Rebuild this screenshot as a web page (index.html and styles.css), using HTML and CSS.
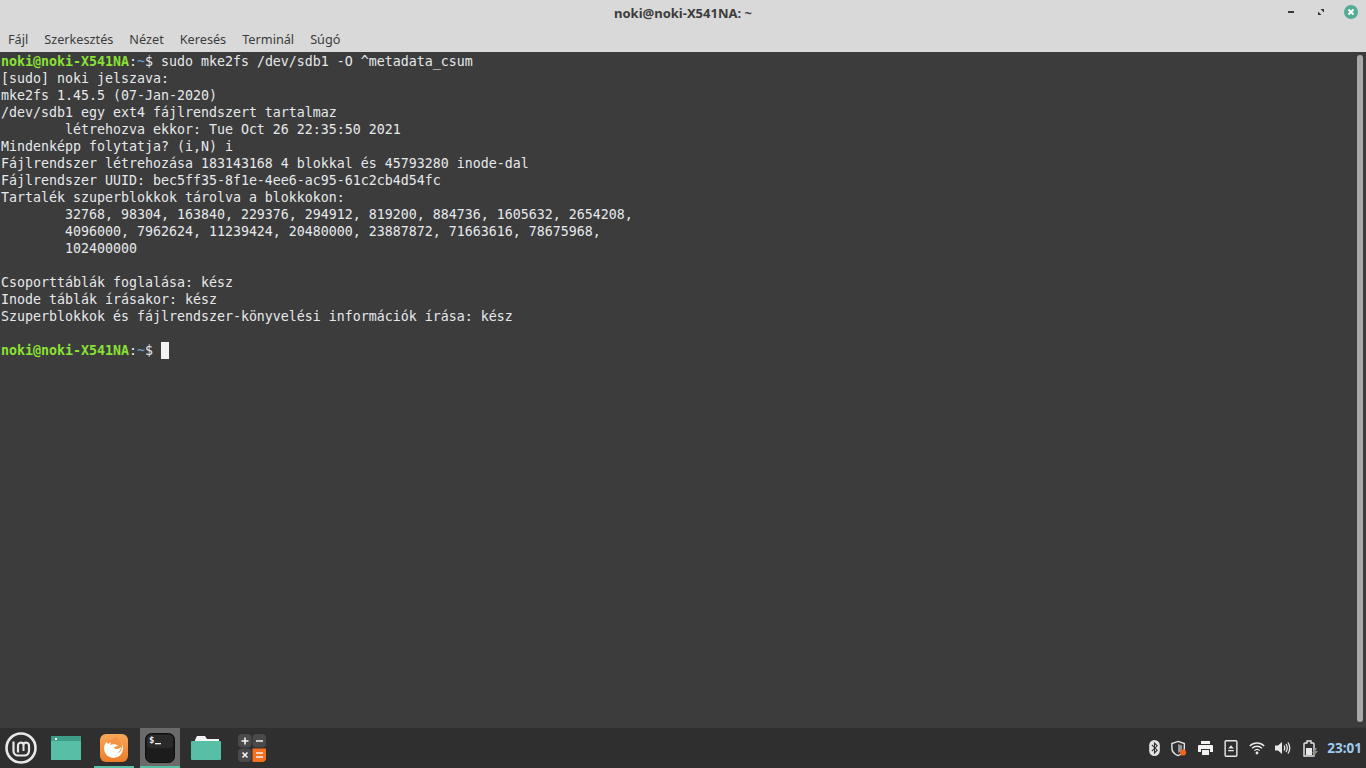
FILE: index.html
```html
<!DOCTYPE html>
<html lang="hu">
<head>
<meta charset="utf-8">
<title>noki@noki-X541NA: ~</title>
<link rel="stylesheet" href="styles.css">
</head>
<body>
<div class="window">
  <header class="titlebar">
    <div class="title">noki@noki-X541NA: ~</div>
    <div class="wm-buttons">
      <svg class="wm-min" width="6" height="2" viewBox="0 0 6 2"><rect width="6" height="2" fill="#3a3a3a"/></svg>
      <svg class="wm-max" width="6" height="6" viewBox="0 0 6 6"><path d="M2.500 0H6v3.500zM3.500 6H0V2.500z" fill="#333"/></svg>
      <svg class="wm-close" width="14" height="14" viewBox="0 0 14 14"><circle cx="7" cy="7" r="7" fill="#52ab95"/><path d="M4.500 4.500l5 5M9.500 4.500l-5 5" stroke="#fff" stroke-width="2"/></svg>
    </div>
  </header>
  <nav class="menubar">
    <span>Fájl</span><span>Szerkesztés</span><span>Nézet</span><span>Keresés</span><span>Terminál</span><span>Súgó</span>
  </nav>
  <main class="terminal">
<pre class="output"><span class="user">noki@noki-X541NA</span>:<span class="path">~</span>$ sudo mke2fs /dev/sdb1 -O ^metadata_csum
[sudo] noki jelszava:
mke2fs 1.45.5 (07-Jan-2020)
/dev/sdb1 egy ext4 fájlrendszert tartalmaz
        létrehozva ekkor: Tue Oct 26 22:35:50 2021
Mindenképp folytatja? (i,N) i
Fájlrendszer létrehozása 183143168 4 blokkal és 45793280 inode-dal
Fájlrendszer UUID: bec5ff35-8f1e-4ee6-ac95-61c2cb4d54fc
Tartalék szuperblokkok tárolva a blokkokon:
        32768, 98304, 163840, 229376, 294912, 819200, 884736, 1605632, 2654208,
        4096000, 7962624, 11239424, 20480000, 23887872, 71663616, 78675968,
        102400000

Csoporttáblák foglalása: kész
Inode táblák írásakor: kész
Szuperblokkok és fájlrendszer-könyvelési információk írása: kész

<span class="user">noki@noki-X541NA</span>:<span class="path">~</span>$ <span class="cursor"> </span></pre>
    <div class="scrollbar"></div>
  </main>
</div>
<footer class="panel">
  <div class="launchers">
    <div class="launch menu-btn">
      <svg width="34" height="34" viewBox="0 0 34 34"><circle cx="17" cy="17" r="14.500" fill="none" stroke="#e8e8e8" stroke-width="2.600"/><path d="M9.500 10.500v9.500a4.500 4.500 0 0 0 4.500 4.500h6.500a4.500 4.500 0 0 0 4.500-4.500v-5.500a3 3 0 0 0-5.500-1.500a3 3 0 0 0-5.500 1.500v7" fill="none" stroke="#e8e8e8" stroke-width="2.200"/><path d="M19.500 13v7" stroke="#e8e8e8" stroke-width="2"/></svg>
    </div>
    <div class="launch">
      <svg width="30" height="24" viewBox="0 0 30 24"><rect width="30" height="24" fill="#56bfa5"/><rect width="30" height="5" fill="#3f9d88"/><rect x="4" y="2" width="2" height="2" fill="#fff"/></svg>
    </div>
    <div class="launch launch-gap running">
      <svg class="fox" width="28" height="28" viewBox="0 0 28 28"><defs><linearGradient id="fx" x1="0" y1="0" x2="0" y2="1"><stop offset="0" stop-color="#f9a858"/><stop offset="1" stop-color="#ee7c28"/></linearGradient></defs><rect width="28" height="28" rx="6" fill="url(#fx)"/><circle cx="13.500" cy="14.500" r="9.500" fill="#fff"/><path d="M6 7l2 3 3-2-1 3c3-1 7-1 8 1-2 0-4 1-4 2 2 2 5 1 7-1 0 3-2 5-4 6 3 0 5-3 5-7 0-4-2-6-5-7l1-2-3 1z" fill="#f39343"/></svg>
    </div>
    <div class="launch active running">
      <svg width="30" height="30" viewBox="0 0 30 30"><rect x=".5" y=".5" width="29" height="29" rx="6" fill="#1c1c1c" stroke="#0d0d0d"/><rect x="2" y="2" width="26" height="13" rx="4" fill="#2a2a2a"/><text x="4" y="10" class="dollar">$</text><rect x="10" y="10" width="6" height="1.300" fill="#f0f0f0"/></svg>
    </div>
    <div class="launch">
      <svg width="30" height="24" viewBox="0 0 30 24"><path d="M4 4l2-4h8l2 3h12v3H4z" fill="#f4f4f4"/><path d="M0 6q0-1 1-1h28q1 0 1 1v17q0 1-1 1H1q-1 0-1-1z" fill="#56bfa5"/></svg>
    </div>
    <div class="launch">
      <svg width="28" height="28" viewBox="0 0 28 28"><rect width="13.500" height="13.500" rx="4" fill="#4a4a4a"/><rect x="14.500" width="13.500" height="13.500" rx="4" fill="#4a4a4a"/><rect y="14.500" width="13.500" height="13.500" rx="4" fill="#4a4a4a"/><path d="M14.500 14.500H28V24a4 4 0 0 1-4 4h-9.500z" fill="#f5701f"/><path d="M3.500 7h7M7 3.500v7M18 7h7M4.500 18.500l5 5M9.500 18.500l-5 5M18 19h7M18 23h7" stroke="#f4f4f4" stroke-width="1.600" fill="none"/></svg>
    </div>
  </div>
  <div class="tray">
    <svg width="11" height="16" viewBox="0 0 12 18"><rect width="12" height="18" rx="6" fill="#e4e4e4"/><path d="M3 5.500l6 6-3 3v-11l3 3-6 6" fill="none" stroke="#2f2f2f" stroke-width="1.200"/></svg>
    <svg width="16" height="17" viewBox="0 0 18 18"><path d="M8 1l7 2.500v5c0 4-3 7-7 8.500c-4-1.500-7-4.500-7-8.500v-5z" fill="none" stroke="#e4e4e4" stroke-width="1.600"/><path d="M8 4l4.500 1.500v3c0 2.500-2 4.500-4.500 5.500z" fill="#9a9a9a"/><circle cx="13.500" cy="13.500" r="3.500" fill="#f0641e"/></svg>
    <svg width="15" height="14" viewBox="0 0 15 14"><path d="M3 0h9v3H3zM1 4h13q1 0 1 1v6h-3V8H3v3H0V5q0-1 1-1zM4 9h7v5H4z" fill="#f2f2f2"/></svg>
    <svg width="14" height="17" viewBox="0 0 14 18"><rect x=".8" y=".8" width="12.400" height="16.400" rx="1" fill="none" stroke="#e8e8e8" stroke-width="1.500"/><path d="M7 5.500l3 3.500H4zM4 10.500h6V12H4z" fill="#e8e8e8"/></svg>
    <svg class="tray-tight" width="16" height="14" viewBox="0 0 17 14"><path d="M.8 4.800a11 11 0 0 1 15.400 0M3.200 7.300a7.600 7.600 0 0 1 10.600 0M5.600 9.800a4.200 4.200 0 0 1 5.800 0" fill="none" stroke="#e8e8e8" stroke-width="1.400"/><circle cx="8.500" cy="12.300" r="1.500" fill="#e8e8e8"/></svg>
    <svg class="tray-tight" width="16" height="14" viewBox="0 0 16 14"><path d="M0 4.500h3L7 1v12L3 9.500H0z" fill="#e8e8e8"/><path d="M9 4.500q1.500 2.500 0 5M11 3q2.500 4 0 8M13 1.500q3.500 5.500 0 11" fill="none" stroke="#e8e8e8" stroke-width="1.300"/></svg>
    <svg class="tray-wide" width="15" height="17" viewBox="0 0 15 17"><path d="M2 3h2V1h4v2h2q1 0 1 1v12H1V4q0-1 1-1z" fill="none" stroke="#e8e8e8" stroke-width="1.400"/><path d="M3 8h6v7H3z" fill="#e8e8e8"/><path d="M12 8l-3 5h2l-1 4 5-6h-2.500l1.500-3z" fill="#8a8a8a"/></svg>
    <time class="clock">23:01</time>
  </div>
</footer>
</body>
</html>
```
FILE: styles.css
```css
* { box-sizing: border-box; }
html, body { margin: 0; padding: 0; height: 100%; overflow: hidden; }
body { display: flex; flex-direction: column; width: 1366px; height: 768px; background: #2f2f2f; }
.window { flex: 1; display: flex; flex-direction: column; min-height: 0; }
.titlebar { height: 26px; background: #d9d9d9; display: flex; align-items: center; justify-content: center; position: relative; }
.title { font: 700 13px "Noto Sans", "Open Sans", sans-serif; color: #3c3c3c; }
.wm-buttons { position: absolute; top: 5px; right: 8px; display: flex; align-items: center; height: 14px; }
.wm-max { margin: 0 20px 0 24px; }
.menubar { height: 26px; background: #d9d9d9; display: flex; gap: 16px; padding: 0 8px; align-items: center; font: 400 12.700px "Noto Sans", "Open Sans", sans-serif; color: #3c3c3c; }
.terminal { flex: 1; background: #3c3c3c; position: relative; overflow: hidden; }
.output { margin: 0; padding: 1px 0 0 1px; font-family: "DejaVu Sans Mono", monospace; font-size: 13.290px; line-height: 17px; color: #e6e9ec; }
.user { color: #8ae234; font-weight: 700; }
.path { color: #729fcf; }
.cursor { background: #f2f2f2; display: inline-block; width: 8px; height: 17px; vertical-align: top; }
.scrollbar { position: absolute; top: 3px; right: 3px; bottom: 5px; width: 6px; border-radius: 3px; background: #a9a9a9; }
.panel { height: 41px; background: #2f2f2f; border-top: 1px solid #3a3a3a; display: flex; justify-content: space-between; align-items: center; flex: none; }
.launchers { display: flex; height: 100%; }
.launch { width: 40px; height: 40px; margin-left: 6px; display: flex; align-items: center; justify-content: center; position: relative; }
.menu-btn { width: 36px; margin-left: 3px; margin-right: 1px; }
.launch-gap { margin-left: 8px; }
.launch.active { background: #6a6a6a; }
.launch.running::after { content: ""; position: absolute; left: 0; right: 0; bottom: 0; height: 2px; background: #56bfa5; }
.dollar { font: 700 9px "DejaVu Sans Mono", monospace; fill: #f0f0f0; }
.tray { display: flex; align-items: center; gap: 11px; padding-right: 4px; }
.tray-tight { margin-right: -1px; }
.tray-wide { margin-left: 2px; margin-right: -2px; }
.clock { font: 700 13.500px "Noto Sans", "Open Sans", sans-serif; color: #9fcbf0; }
```
